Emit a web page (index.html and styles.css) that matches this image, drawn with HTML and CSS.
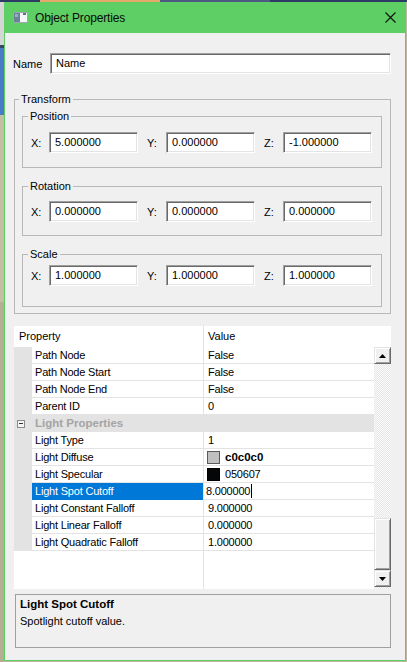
FILE: index.html
```html
<!DOCTYPE html>
<html>
<head>
<meta charset="utf-8">
<title>Object Properties</title>
<link rel="stylesheet" href="styles.css">
</head>
<body>
<div class="topstrip"><span class="s1"></span><span class="s2"></span><span class="s3"></span><span class="s4"></span></div>
<div class="main">
  <div class="desk"></div>
  <div class="window">
    <div class="titlebar">
      <svg class="appicon" width="15" height="11" viewBox="0 0 15 11">
        <rect x="0.5" y="0.5" width="14" height="10" fill="#f4f6f8" stroke="#9ea8b2"/>
        <rect x="1" y="1" width="6" height="9" fill="#6a8496"/>
        <rect x="2" y="2" width="3" height="3" fill="#93b2c6"/>
        <rect x="10" y="1" width="3" height="2" fill="#5f7385"/>
      </svg>
      <span class="title">Object Properties</span>
      <svg class="close" width="11" height="11" viewBox="0 0 11 11">
        <path d="M0.5 0.5 L10.5 10.5 M10.5 0.5 L0.5 10.5" stroke="#111" stroke-width="1.1" fill="none"/>
      </svg>
    </div>
    <div class="content">
      <div class="namerow">
        <span class="namelabel">Name</span>
        <div class="field namefield">Name</div>
      </div>

      <fieldset class="group transform">
        <legend>Transform</legend>
        <fieldset class="group sub pos">
          <legend>Position</legend>
          <div class="xyz">
            <span class="ax">X:</span><div class="field">5.000000</div>
            <span class="ax gap">Y:</span><div class="field">0.000000</div>
            <span class="ax gap">Z:</span><div class="field">-1.000000</div>
          </div>
        </fieldset>
        <fieldset class="group sub rot">
          <legend>Rotation</legend>
          <div class="xyz">
            <span class="ax">X:</span><div class="field">0.000000</div>
            <span class="ax gap">Y:</span><div class="field">0.000000</div>
            <span class="ax gap">Z:</span><div class="field">0.000000</div>
          </div>
        </fieldset>
        <fieldset class="group sub scl">
          <legend>Scale</legend>
          <div class="xyz">
            <span class="ax">X:</span><div class="field">1.000000</div>
            <span class="ax gap">Y:</span><div class="field">1.000000</div>
            <span class="ax gap">Z:</span><div class="field">1.000000</div>
          </div>
        </fieldset>
      </fieldset>

      <div class="pgrid">
        <div class="phead"><div class="hname">Property</div><div class="hval">Value</div></div>
        <div class="pbody">
          <div class="rows">
            <div class="row"><div class="gut"></div><div class="pn">Path Node</div><div class="pv">False</div></div>
            <div class="row"><div class="gut"></div><div class="pn">Path Node Start</div><div class="pv">False</div></div>
            <div class="row"><div class="gut"></div><div class="pn">Path Node End</div><div class="pv">False</div></div>
            <div class="row"><div class="gut"></div><div class="pn">Parent ID</div><div class="pv">0</div></div>
            <div class="row cat"><div class="gut"><span class="minus"></span></div><div class="catname">Light Properties</div></div>
            <div class="row"><div class="gut"></div><div class="pn">Light Type</div><div class="pv">1</div></div>
            <div class="row"><div class="gut"></div><div class="pn">Light Diffuse</div><div class="pv"><span class="swatch sw-grey"></span><b>c0c0c0</b></div></div>
            <div class="row"><div class="gut"></div><div class="pn">Light Specular</div><div class="pv"><span class="swatch sw-black"></span>050607</div></div>
            <div class="row sel"><div class="gut"></div><div class="pn">Light Spot Cutoff</div><div class="pv edit"><span class="caret">8.000000</span></div></div>
            <div class="row"><div class="gut"></div><div class="pn">Light Constant Falloff</div><div class="pv">9.000000</div></div>
            <div class="row"><div class="gut"></div><div class="pn">Light Linear Falloff</div><div class="pv">0.000000</div></div>
            <div class="row"><div class="gut"></div><div class="pn">Light Quadratic Falloff</div><div class="pv">1.000000</div></div>
            <div class="filler"><div></div><div></div><div class="fv"></div></div>
          </div>
          <div class="vscroll">
            <div class="sbtn"><svg width="7" height="4" viewBox="0 0 7 4"><polygon points="0,4 7,4 3.5,0" fill="#000"/></svg></div>
            <div class="track"></div>
            <div class="thumb"></div>
            <div class="sbtn"><svg width="7" height="4" viewBox="0 0 7 4"><polygon points="0,0 7,0 3.5,4" fill="#000"/></svg></div>
            <div class="track tail"></div>
          </div>
        </div>
      </div>

      <div class="desc">
        <div class="dtitle">Light Spot Cutoff</div>
        <div class="dtext">Spotlight cutoff value.</div>
      </div>
    </div>
  </div>
</div>
</body>
</html>
```
FILE: styles.css
```css
* { box-sizing: border-box; }
html, body { margin: 0; padding: 0; }
body {
  width: 407px;
  height: 662px;
  overflow: hidden;
  background: #bdb79f;
  font-family: "Liberation Sans", Arial, sans-serif;
  font-size: 11px;
  color: #000;
}

.topstrip { display: flex; height: 2px; }
.s1 { width: 40px; background: #2c3b63; }
.s2 { width: 120px; background: #e3a86a; }
.s3 { width: 110px; background: #4b5a80; }
.s4 { flex: 1; background: #2c3b63; }

.main { display: flex; height: 660px; }
.desk {
  width: 4px;
  background: linear-gradient(#d6d6d6 0 43px, #3a4868 43px 46px, #4a7bc6 46px 113px, #c4bea4 113px 300px, #b3ae94 300px);
}

.window {
  width: 402px;
  height: 659px;
  border: 1px solid #5ecf64;
  border-top: none;
  background: #f0f0f0;
  display: flex;
  flex-direction: column;
}

.titlebar {
  height: 31px;
  flex: none;
  background: #5ecf64;
  display: flex;
  align-items: center;
  padding-left: 8px;
}
.appicon { display: block; flex: none; }
.title {
  margin-left: 7px;
  font-size: 12px;
  letter-spacing: -0.15px;
  color: #0a0a0a;
}
.close { margin-left: auto; margin-right: 9px; display: block; }

.content { padding-top: 20px; flex: 1; }

.namerow { display: flex; align-items: center; height: 21px; }
.namelabel { width: 37px; margin-left: 8px; }
.field {
  height: 21px;
  width: 89px;
  background: #fff;
  border: 1px solid;
  border-color: #a0a0a0 #fff #fff #a0a0a0;
  box-shadow: inset 1px 1px #696969, inset -1px -1px #e3e3e3;
  padding-left: 5px;
  line-height: 19px;
  white-space: nowrap;
}
.namefield { width: 341px; }

.group {
  border: 1px solid #b8b8b8;
  min-inline-size: 0;
}
.group > legend {
  padding: 0 2px;
  margin-left: -3px;
  height: 14px;
  line-height: 14px;
}
.transform { margin: 18px 0 0 9px; width: 377px; padding: 3px 8px 6px 7px; }
.pos { margin: 0; padding: 9px 8px 14px 8px; }
.rot { margin: 11px 0 0 0; padding: 8px 8px 13px 8px; }
.scl { margin: 11px 0 0 0; padding: 4px 8px 20px 8px; }

.xyz {
  display: grid;
  grid-template-columns: 18px 89px 28px 89px 28px 89px;
  align-items: center;
  height: 21px;
}
.ax.gap { padding-left: 9px; }

.pgrid { margin: 12px 0 0 9px; width: 377px; background: #fff; }
.phead {
  display: grid;
  grid-template-columns: 189px 1fr;
  height: 21px;
}
.hname { padding-left: 5px; line-height: 21px; }
.hval { border-left: 1px solid #e2e2e2; padding-left: 4px; line-height: 21px; }

.pbody { display: flex; height: 242px; }
.rows { width: 360px; display: flex; flex-direction: column; }
.row {
  display: grid;
  grid-template-columns: 18px 171px 171px;
  height: 17px;
}
.gut { background: #e3e3e3; }
.pn, .pv {
  border-bottom: 1px solid #e3e3e3;
  line-height: 16px;
  white-space: nowrap;
  overflow: hidden;
  letter-spacing: -0.2px;
}
.pn { padding-left: 3px; }
.pv { border-left: 1px solid #e3e3e3; padding-left: 4px; display: flex; align-items: center; }
.pv b { font-weight: bold; font-size: 11.5px; letter-spacing: 0; }

.cat { background: #e3e3e3; }
.cat .gut { display: flex; align-items: center; }
.minus {
  width: 8px;
  height: 8px;
  margin-left: 3px;
  border: 1px solid #8c8c8c;
  background: linear-gradient(#333, #333) center / 4px 1px no-repeat, #f4f4f4;
}
.catname {
  grid-column: span 2;
  padding-left: 3px;
  line-height: 17px;
  font-weight: bold;
  font-size: 11.5px;
  color: #a4a4a4;
}

.swatch {
  width: 13px;
  height: 13px;
  margin: 0 5px 0 -1px;
  border: 1px solid #5a5a5a;
  flex: none;
}
.sw-grey { background: #c0c0c0; }
.sw-black { background: #050607; border-color: #000; }

.sel .pn { background: #0078d7; color: #fff; border-bottom-color: #0078d7; }
.pv.edit { padding-left: 2px; }
.caret { border-right: 1px solid #000; line-height: 14px; padding-right: 1px; }

.filler {
  display: grid;
  grid-template-columns: 18px 171px 171px;
  flex: 1;
}
.fv { border-left: 1px solid #e3e3e3; }

.vscroll { width: 17px; display: flex; flex-direction: column; }
.sbtn, .thumb {
  background: #f0f0f0;
  border: 1px solid;
  border-color: #e3e3e3 #696969 #696969 #e3e3e3;
  box-shadow: inset 1px 1px #fff, inset -1px -1px #a0a0a0;
}
.sbtn {
  height: 17px;
  flex: none;
  display: flex;
  align-items: center;
  justify-content: center;
}
.sbtn svg { display: block; }
.track {
  height: 154px;
  flex: none;
  background: repeating-conic-gradient(#e6e6e6 0 25%, #fbfbfb 0 50%) 0 0 / 2px 2px;
}
.track.tail { height: 2px; }
.thumb { height: 52px; flex: none; }

.desc {
  margin: 5px 0 0 10px;
  width: 376px;
  height: 54px;
  border: 1px solid #a0a0a0;
  padding: 2px 0 0 4px;
}
.dtitle { font-weight: bold; line-height: 14px; margin-bottom: 3px; font-size: 11.5px; }
.dtext { line-height: 14px; }
```
